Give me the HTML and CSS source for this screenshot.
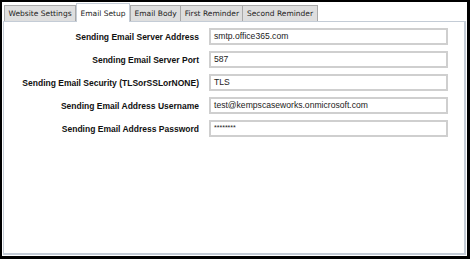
FILE: index.html
```html
<!DOCTYPE html>
<html>
<head>
<meta charset="utf-8">
<link rel="stylesheet" href="styles.css">
</head>
<body>
<div class="frame">
  <div class="tabs">
    <div class="tab">Website Settings</div>
    <div class="tab active">Email Setup</div>
    <div class="tab">Email Body</div>
    <div class="tab">First Reminder</div>
    <div class="tab">Second Reminder</div>
  </div>
  <div class="panel">
    <div class="form">
      <label class="label">Sending Email Server Address</label>
      <div class="input">smtp.office365.com</div>
      <label class="label">Sending Email Server Port</label>
      <div class="input">587</div>
      <label class="label">Sending Email Security (TLSorSSLorNONE)</label>
      <div class="input">TLS</div>
      <label class="label">Sending Email Address Username</label>
      <div class="input">test@kempscaseworks.onmicrosoft.com</div>
      <label class="label">Sending Email Address Password</label>
      <div class="input pw">********</div>
    </div>
  </div>
</div>
</body>
</html>
```
FILE: styles.css
```css
html, body {
  margin: 0;
  padding: 0;
  background: #ffffff;
}
.frame {
  width: 470px;
  height: 259px;
  box-sizing: border-box;
  border-style: solid;
  border-color: #000000;
  border-width: 2px 3px 3px 2px;
  padding: 2px 1px 1px 1px;
  display: flex;
  flex-direction: column;
  background: #ffffff;
}
.tabs {
  display: flex;
  align-items: flex-end;
  height: 17px;
  padding-left: 1px;
  position: relative;
  z-index: 1;
}
.tab {
  font-family: "DejaVu Sans", sans-serif;
  font-size: 7.5px;
  color: #222222;
  background: #dedede;
  border: 1px solid #a9a9a9;
  border-bottom: none;
  height: 16px;
  line-height: 16px;
  padding: 0 3.5px;
  margin-right: -1px;
  box-sizing: border-box;
}
.tab.active {
  background: #ffffff;
  height: 19px;
  line-height: 19px;
  margin-bottom: -1px;
  border-color: #c4ccd6;
  margin-right: 0;
  margin-left: 1px;
}
.panel {
  flex: 1;
  border: 1px solid #c4ccd6;
  border-bottom-width: 2px;
  border-right-width: 2px;
  background: #ffffff;
}
.form {
  display: grid;
  grid-template-columns: 195px 239px;
  column-gap: 10px;
  row-gap: 6px;
  padding-top: 6px;
  align-items: center;
}
.label {
  font-family: "Liberation Sans", Arial, sans-serif;
  font-weight: bold;
  font-size: 8.5px;
  color: #111111;
  text-align: right;
}
.input {
  font-family: "Liberation Sans", Arial, sans-serif;
  font-size: 8.6px;
  color: #222222;
  height: 17px;
  line-height: 13px;
  box-sizing: border-box;
  border: 2px solid #cfcfcf;
  padding: 0 3px;
}
.input.pw {
  font-size: 7px;
  line-height: 11px;
}
```
